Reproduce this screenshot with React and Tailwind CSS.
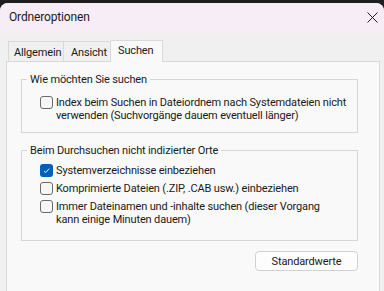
import React from "react";

function Checkbox({ checked }) {
  if (checked) {
    return (
      <span className="shrink-0 w-[13px] h-[13px] rounded-[3px] bg-[#005fb8] flex items-center justify-center">
        <svg width="9" height="9" viewBox="0 0 9 9" fill="none">
          <path d="M2 4.9 L3.8 6.5 L7.2 2.6" stroke="#ffffff" strokeWidth="0.9" />
        </svg>
      </span>
    );
  }
  return (
    <span className="shrink-0 w-[13px] h-[13px] rounded-[3px] border border-[#6b6b6b] bg-[#f6f6f6]" />
  );
}

function Option({ checked, children }) {
  return (
    <div className="flex gap-[3px] whitespace-nowrap">
      <Checkbox checked={checked} />
      <span>{children}</span>
    </div>
  );
}

function Group({ title, children, className }) {
  return (
    <fieldset className={"border border-[#d6d6d6] w-[337px] ml-[14px] " + (className || "")}>
      <legend className="ml-[5px] px-[3px]">{title}</legend>
      {children}
    </fieldset>
  );
}

export default function App() {
  return (
    <div
      className="w-[384px] h-[291px] overflow-hidden bg-[#1e1e1e] pt-[3px] text-[11px] leading-[13px] tracking-[-0.15px] text-[#1a1a1a]"
      style={{ fontFamily: 'Roboto, "Liberation Sans", sans-serif' }}
    >
      <div className="h-full rounded-t-[8px] bg-[#f0f0f0] overflow-hidden">
        <div className="h-[30px] bg-[#f6edf6] flex items-center justify-between pl-[9px] pr-[6px]">
          <span className="text-[12px] -mt-[2px]">Ordneroptionen</span>
          <svg width="11" height="11" viewBox="0 0 11 11" className="-mt-[2px]">
            <path d="M0.5 0.5 L10.5 10.5 M10.5 0.5 L0.5 10.5" stroke="#1a1a1a" strokeWidth="1" />
          </svg>
        </div>

        <div className="pt-[7px] pl-[6px]">
          <div className="flex items-end pl-[2px] whitespace-nowrap">
            <div className="h-[20px] pl-[5px] pt-[2px] border border-b-0 border-[#d9d9d9] bg-[#f0f0f0] flex items-center w-[56px]">
              Allgemein
            </div>
            <div className="h-[20px] pl-[7px] pt-[2px] border border-b-0 border-l-0 border-[#d9d9d9] bg-[#f0f0f0] flex items-center w-[47px]">
              Ansicht
            </div>
            <div className="relative z-10 -mb-px h-[22px] pl-[7px] border border-b-0 border-l-0 border-[#d9d9d9] bg-[#f9f9f9] flex items-center w-[52px] pb-[3px]">
              Suchen
            </div>
          </div>

          <div className="w-[374px] h-[240px] border border-[#d9d9d9] bg-[#f9f9f9] pt-[11px]">
            <Group title="Wie möchten Sie suchen" className="h-[60px]">
              <div className="pl-[18px] pt-[10px]">
                <Option>
                  Index beim Suchen in Dateiordnem nach Systemdateien nicht
                  <br />
                  verwenden (Suchvorgänge dauem eventuell länger)
                </Option>
              </div>
            </Group>

            <Group title="Beim Durchsuchen nicht indizierter Orte" className="mt-[11px] h-[97px]">
              <div className="pl-[18px] pt-[7px] flex flex-col gap-[5px]">
                <Option checked>Systemverzeichnisse einbeziehen</Option>
                <Option>Komprimierte Dateien (.ZIP, .CAB usw.) einbeziehen</Option>
                <Option>
                  Immer Dateinamen und -inhalte suchen (dieser Vorgang
                  <br />
                  kann einige Minuten dauem)
                </Option>
              </div>
            </Group>

            <div className="flex justify-end w-[351px] mt-[10px]">
              <button className="w-[103px] h-[20px] rounded-[4px] border border-[#d0d0d0] bg-[#fdfdfd] tracking-[-0.15px]">
                Standardwerte
              </button>
            </div>
          </div>
        </div>
      </div>
    </div>
  );
}
